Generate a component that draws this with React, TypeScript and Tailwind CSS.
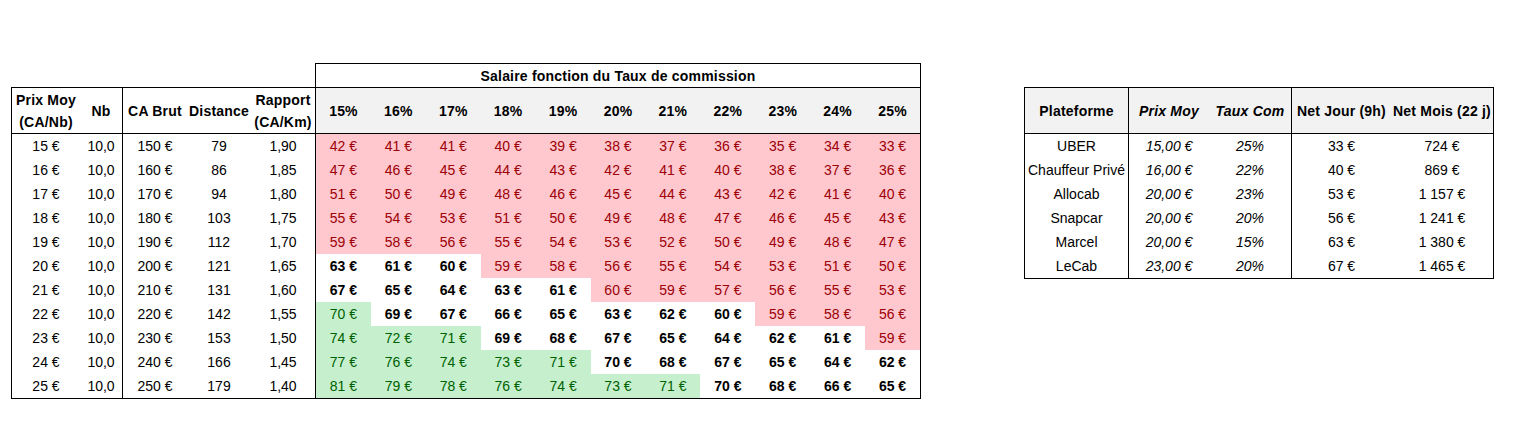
import React from 'react';

const taux = ['15%', '16%', '17%', '18%', '19%', '20%', '21%', '22%', '23%', '24%', '25%'];

// green = number of cells (from the left) in green, pink = index where the red zone starts
const rows = [
  { prix: 15, ca: 150, dist: 79, rapport: '1,90', sal: [42, 41, 41, 40, 39, 38, 37, 36, 35, 34, 33], green: 0, pink: 0 },
  { prix: 16, ca: 160, dist: 86, rapport: '1,85', sal: [47, 46, 45, 44, 43, 42, 41, 40, 38, 37, 36], green: 0, pink: 0 },
  { prix: 17, ca: 170, dist: 94, rapport: '1,80', sal: [51, 50, 49, 48, 46, 45, 44, 43, 42, 41, 40], green: 0, pink: 0 },
  { prix: 18, ca: 180, dist: 103, rapport: '1,75', sal: [55, 54, 53, 51, 50, 49, 48, 47, 46, 45, 43], green: 0, pink: 0 },
  { prix: 19, ca: 190, dist: 112, rapport: '1,70', sal: [59, 58, 56, 55, 54, 53, 52, 50, 49, 48, 47], green: 0, pink: 0 },
  { prix: 20, ca: 200, dist: 121, rapport: '1,65', sal: [63, 61, 60, 59, 58, 56, 55, 54, 53, 51, 50], green: 0, pink: 3 },
  { prix: 21, ca: 210, dist: 131, rapport: '1,60', sal: [67, 65, 64, 63, 61, 60, 59, 57, 56, 55, 53], green: 0, pink: 5 },
  { prix: 22, ca: 220, dist: 142, rapport: '1,55', sal: [70, 69, 67, 66, 65, 63, 62, 60, 59, 58, 56], green: 1, pink: 8 },
  { prix: 23, ca: 230, dist: 153, rapport: '1,50', sal: [74, 72, 71, 69, 68, 67, 65, 64, 62, 61, 59], green: 3, pink: 10 },
  { prix: 24, ca: 240, dist: 166, rapport: '1,45', sal: [77, 76, 74, 73, 71, 70, 68, 67, 65, 64, 62], green: 5, pink: 11 },
  { prix: 25, ca: 250, dist: 179, rapport: '1,40', sal: [81, 79, 78, 76, 74, 73, 71, 70, 68, 66, 65], green: 7, pink: 11 },
];

const plateformes = [
  { nom: 'UBER', prix: '15,00 €', taux: '25%', jour: '33 €', mois: '724 €' },
  { nom: 'Chauffeur Privé', prix: '16,00 €', taux: '22%', jour: '40 €', mois: '869 €' },
  { nom: 'Allocab', prix: '20,00 €', taux: '23%', jour: '53 €', mois: '1 157 €' },
  { nom: 'Snapcar', prix: '20,00 €', taux: '20%', jour: '56 €', mois: '1 241 €' },
  { nom: 'Marcel', prix: '20,00 €', taux: '15%', jour: '63 €', mois: '1 380 €' },
  { nom: 'LeCab', prix: '23,00 €', taux: '20%', jour: '67 €', mois: '1 465 €' },
];

const leftCols = 'grid grid-cols-[68px_43px_64px_64px_65px_repeat(11,minmax(0,1fr))]';
const rightCols = 'grid grid-cols-[104px_80px_83px_99px_102px]';

function cellClass(i: number, green: number, pink: number) {
  if (i < green) return 'bg-[#c6efce] text-[#006100]';
  if (i >= pink) return 'bg-[#ffc7ce] text-[#9c0006]';
  return 'bg-white text-black font-bold';
}

const SalaireTable: React.FC = () => (
  <div className="w-[910px] shrink-0">
    {/* Title over the commission columns */}
    <div className="ml-[304px] h-[24px] border-x border-t border-black flex items-center justify-center font-bold tracking-[0.2px]">
      Salaire fonction du Taux de commission
    </div>

    <div className="border border-black">
      {/* Header */}
      <div className={`${leftCols} h-[46px] border-b border-black font-bold tracking-[0.2px]`}>
        <div className="flex flex-col items-center justify-center leading-[22px]">
          <span>Prix Moy</span>
          <span>(CA/Nb)</span>
        </div>
        <div className="flex items-center justify-center border-r border-black">Nb</div>
        <div className="flex items-center justify-center">CA Brut</div>
        <div className="flex items-center justify-center">Distance</div>
        <div className="flex flex-col items-center justify-center leading-[22px] border-r border-black">
          <span>Rapport</span>
          <span>(CA/Km)</span>
        </div>
        {taux.map((t) => (
          <div key={t} className="flex items-center justify-center bg-[#f2f2f2]">
            {t}
          </div>
        ))}
      </div>

      {/* Rows */}
      {rows.map((r) => (
        <div key={r.prix} className={`${leftCols} h-6`}>
          <div className="flex items-center justify-center">{r.prix} €</div>
          <div className="flex items-center justify-center border-r border-black">10,0</div>
          <div className="flex items-center justify-center">{r.ca} €</div>
          <div className="flex items-center justify-center">{r.dist}</div>
          <div className="flex items-center justify-center border-r border-black">{r.rapport}</div>
          {r.sal.map((s, i) => (
            <div key={i} className={`flex items-center justify-center ${cellClass(i, r.green, r.pink)}`}>
              {s} €
            </div>
          ))}
        </div>
      ))}
    </div>
  </div>
);

const PlateformeTable: React.FC = () => (
  <div className="mt-[24px] ml-[103px] w-[470px] shrink-0 border border-black">
    <div className={`${rightCols} h-[46px] border-b border-black bg-[#f2f2f2] font-bold tracking-[0.2px]`}>
      <div className="flex items-center justify-center border-r border-black">Plateforme</div>
      <div className="flex items-center justify-center italic">Prix Moy</div>
      <div className="flex items-center justify-center italic border-r border-black">Taux Com</div>
      <div className="flex items-center justify-center whitespace-nowrap">Net Jour (9h)</div>
      <div className="flex items-center justify-center whitespace-nowrap">Net Mois (22 j)</div>
    </div>
    {plateformes.map((p) => (
      <div key={p.nom} className={`${rightCols} h-6`}>
        <div className="flex items-center justify-center border-r border-black whitespace-nowrap">{p.nom}</div>
        <div className="flex items-center justify-center italic">{p.prix}</div>
        <div className="flex items-center justify-center italic border-r border-black">{p.taux}</div>
        <div className="flex items-center justify-center">{p.jour}</div>
        <div className="flex items-center justify-center">{p.mois}</div>
      </div>
    ))}
  </div>
);

const App: React.FC = () => (
  <div className="w-[1513px] h-[430px] bg-white text-black text-[14px] leading-none font-['Liberation_Sans',Arial,sans-serif]">
    <div className="flex items-start pt-[63px] pl-[11px]">
      <SalaireTable />
      <PlateformeTable />
    </div>
  </div>
);

export default App;
